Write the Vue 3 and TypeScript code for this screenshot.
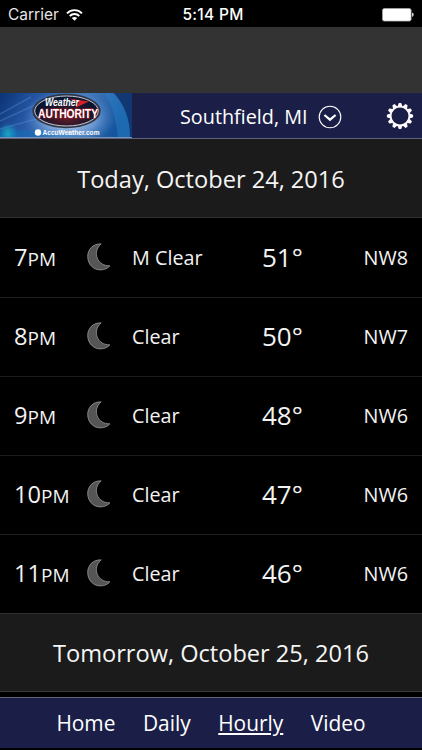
<script setup lang="ts">
interface Hour {
    hour: number;
    sky: string;
    temp: number;
    wind: string;
}

const hours: Hour[] = [
    { hour: 7, sky: 'M Clear', temp: 51, wind: 'NW8' },
    { hour: 8, sky: 'Clear', temp: 50, wind: 'NW7' },
    { hour: 9, sky: 'Clear', temp: 48, wind: 'NW6' },
    { hour: 10, sky: 'Clear', temp: 47, wind: 'NW6' },
    { hour: 11, sky: 'Clear', temp: 46, wind: 'NW6' },
];

const tabs = ['Home', 'Daily', 'Hourly', 'Video'];
const active = 'Hourly';

const teeth = Array.from({ length: 12 }, (_, i) => i * 30);
</script>

<template>
    <div class="app">
        <div class="status-bar">
            <div class="carrier">
                <span>Carrier</span>
                <svg width="17" height="12" viewBox="0 0 17 12">
                    <g fill="none" stroke="#fff" stroke-width="1.9">
                        <path d="M1 4.3C5.2.1 11.8.1 16 4.3" />
                        <path d="M3.7 7C6.4 4.4 10.6 4.4 13.3 7" />
                    </g>
                    <path d="M5.8 9C7.4 7.6 9.6 7.6 11.2 9L8.5 11.7Z" fill="#fff" />
                </svg>
            </div>
            <div class="clock">5:14 PM</div>
            <svg class="battery" width="32" height="14" viewBox="0 0 32 14">
                <rect x=".5" y=".5" width="28.6" height="12.6" rx="1.8" fill="#fff" stroke="#aaa" stroke-width=".7" />
                <path d="M30.2 4.6Q31.6 5.2 31.6 6.8T30.2 9Z" fill="#fff" />
            </svg>
        </div>

        <div class="ad-space"></div>

        <header class="header">
            <svg class="logo" width="132" height="45" viewBox="0 0 132 45">
                <defs>
                    <linearGradient id="sky" x1="0" y1="0" x2="1" y2=".2">
                        <stop offset="0" stop-color="#0b3274" />
                        <stop offset=".3" stop-color="#2758a6" />
                        <stop offset=".65" stop-color="#4478bb" />
                        <stop offset="1" stop-color="#15559d" />
                    </linearGradient>
                    <radialGradient id="glow">
                        <stop offset="0" stop-color="#d5e4f7" />
                        <stop offset=".6" stop-color="#7da6dc" stop-opacity=".7" />
                        <stop offset="1" stop-color="#477fc5" stop-opacity="0" />
                    </radialGradient>
                    <radialGradient id="teal">
                        <stop offset="0" stop-color="#25c5c8" />
                        <stop offset="1" stop-color="#159bcf" stop-opacity="0" />
                    </radialGradient>
                    <radialGradient id="badge" cy=".7">
                        <stop offset="0" stop-color="#671b27" />
                        <stop offset=".55" stop-color="#2c1729" />
                        <stop offset="1" stop-color="#0b1630" />
                    </radialGradient>
                </defs>
                <rect width="132" height="45" fill="url(#sky)" />
                <path d="M0 21L31 4M0 28L35 12M0 36L40 25" stroke="#69b8ef" stroke-width="1.5" opacity=".25" />
                <path d="M112 0Q130 16 131 45H118Q116 19 105 0Z" fill="#2680c5" opacity=".5" />
                <path d="M114 0H132V45H130Q130 17 114 0Z" fill="#123874" />
                <ellipse cx="69" cy="25" rx="46" ry="29" fill="url(#glow)" />
                <circle cx="8" cy="41" r="11" fill="url(#teal)" />
                <path d="M0 38Q42 35 91 45H0Z" fill="#0876bd" opacity=".35" />
                <ellipse cx="66.5" cy="18" rx="33.2" ry="16.2" fill="url(#badge)" stroke="#303747" stroke-width="2" />
                <ellipse cx="66.5" cy="18" rx="31.8" ry="15" fill="none" stroke="#c3cad4" stroke-width="1" />
                <path d="M69 5.5L89 8.5L75 15L79 9.5Z" fill="#d5202c" />
                <text x="45" y="12.8" class="logo-weather" textLength="34" lengthAdjust="spacingAndGlyphs">Weather</text>
                <text x="38" y="24.6" class="logo-authority" textLength="60" lengthAdjust="spacingAndGlyphs">AUTHORITY</text>
                <circle cx="38" cy="39.5" r="3.2" fill="#fff" />
                <text x="42.5" y="42.2" class="logo-accu" textLength="57" lengthAdjust="spacingAndGlyphs">AccuWeather.com</text>
                <path d="M0 44.5H132" stroke="#7492bb" />
            </svg>
            <div class="location">
                <span>Southfield, MI</span>
                <svg width="24" height="24" viewBox="0 0 24 24" fill="none" stroke="#fff">
                    <circle cx="12" cy="12" r="10.8" stroke-width="1.1" />
                    <path d="M6.4 10L12 14.7L17.6 10" stroke-width="2.2" />
                </svg>
            </div>
            <svg class="gear" width="28" height="28" viewBox="-14 -14 28 28">
                <circle r="9.4" fill="none" stroke="#fff" stroke-width="1.8" />
                <path
                    v-for="angle in teeth"
                    :key="angle"
                    d="M-2.5 -9.6L-1.2 -13.1H1.2L2.5 -9.6Z"
                    fill="#fff"
                    :transform="`rotate(${angle})`"
                />
            </svg>
        </header>

        <main class="forecast">
            <h2 class="day today">Today, October 24, 2016</h2>
            <div v-for="item in hours" :key="item.hour" class="hour-row">
                <div class="time">{{ item.hour }}<span class="meridiem">PM</span></div>
                <svg class="moon" width="24" height="28" viewBox="0 0 24 28">
                    <path
                        d="M14.2.9C5.8.4.7 6.7.7 13.4C.7 21.2 6.4 26.9 13.3 26.9C17.5 26.9 21 25.2 22.9 22.8C10.8 23.6 4.3 9 14.2.9Z"
                        fill="#555"
                        stroke="#999"
                        stroke-width=".8"
                    />
                </svg>
                <div class="sky">{{ item.sky }}</div>
                <div class="temp">{{ item.temp }}°</div>
                <div class="wind">{{ item.wind }}</div>
            </div>
            <h2 class="day tomorrow">Tomorrow, October 25, 2016</h2>
        </main>

        <nav class="tabs">
            <a v-for="tab in tabs" :key="tab" class="tab" :class="{ active: tab === active }">{{ tab }}</a>
        </nav>
    </div>
</template>

<style>
body {
    background: #000;
}
</style>

<style scoped>
.app {
    width: 422px;
    height: 750px;
    display: flex;
    flex-direction: column;
    overflow: hidden;
    background: #000;
    color: #fff;
    font-family: 'Open Sans', 'Noto Sans', sans-serif;
}

svg {
    display: block;
    flex: none;
}

.status-bar {
    height: 27px;
    flex: none;
    display: grid;
    grid-template-columns: 1fr auto 1fr;
    align-items: center;
    padding: 2px 8px 0;
    box-sizing: border-box;
    font-family: Inter, sans-serif;
    font-size: 15.5px;
}

.carrier {
    display: flex;
    align-items: center;
    gap: 7px;
    color: #e5e5e5;
}

.clock {
    padding-left: 4px;
    font-weight: 500;
    letter-spacing: 0.3px;
}

.battery {
    justify-self: end;
}

.ad-space {
    height: 66px;
    flex: none;
    background: #333;
}

.header {
    height: 46px;
    flex: none;
    box-sizing: border-box;
    display: flex;
    align-items: center;
    background: #1b1f48;
    border-bottom: 1px solid #606279;
}

.logo-weather {
    font: italic bold 11.3px 'Liberation Sans', sans-serif;
    fill: #fff;
}

.logo-authority {
    font: bold 12.8px 'Liberation Sans', sans-serif;
    fill: #fff;
    stroke: #b51d2b;
    stroke-width: 1px;
    paint-order: stroke;
}

.logo-accu {
    font: bold 8px 'Liberation Sans', sans-serif;
    fill: #fff;
}

.location {
    flex: 1;
    display: flex;
    align-items: center;
    gap: 10px;
    padding: 2px 0 0 48px;
    font-size: 19.8px;
    white-space: nowrap;
}

.gear {
    margin-right: 8px;
}

.day {
    height: 79px;
    margin: 0;
    box-sizing: border-box;
    display: flex;
    align-items: center;
    justify-content: center;
    background: #1b1b1b;
    font-size: 23.6px;
    font-weight: 400;
    color: #f5f5f5;
}

.today {
    padding-top: 2px;
    border-bottom: 1px solid #303030;
}

.tomorrow {
    padding-top: 1px;
    border-top: 1px solid #303030;
    border-bottom: 1px solid #3a3a3a;
}

.hour-row {
    height: 79px;
    box-sizing: border-box;
    display: grid;
    grid-template-columns: 73px 45px 130px 1fr auto;
    align-items: center;
    padding: 0 14px;
    color: #f3f3f3;
    font-size: 19.8px;
}

.hour-row + .hour-row {
    box-shadow: inset 0 1px #1c1c1c;
}

.time {
    font-size: 23.6px;
    padding-bottom: 1px;
}

.meridiem {
    font-size: 19px;
}

.moon {
    margin-bottom: 2px;
}

.temp {
    font-size: 26px;
    padding-bottom: 2px;
}

.tabs {
    height: 52px;
    flex: none;
    box-sizing: border-box;
    margin-top: 5px;
    display: flex;
    align-items: center;
    justify-content: center;
    gap: 27.5px;
    background: #1b1f48;
    border-top: 1px solid #606279;
    border-bottom: 1px solid #000;
    font-size: 20.9px;
}

.active {
    text-decoration: underline;
}
</style>
